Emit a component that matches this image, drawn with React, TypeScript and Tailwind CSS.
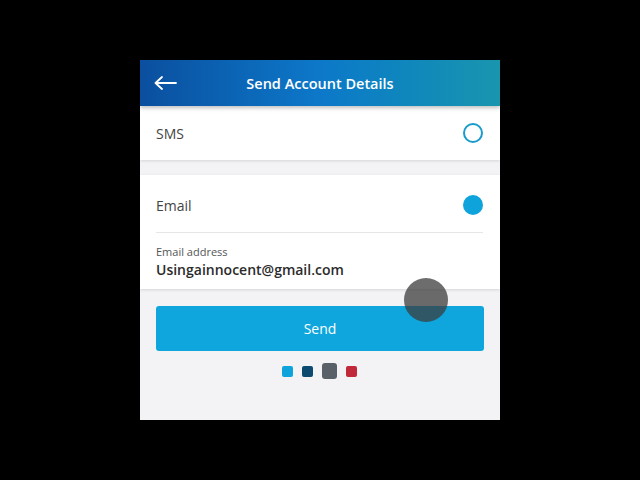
import React from "react";

export default function App() {
  const font = { fontFamily: '"Open Sans", "Noto Sans", sans-serif' };
  return (
    <div className="w-[640px] h-[480px] bg-black flex items-center justify-center" style={font}>
      <div className="relative w-[360px] h-[360px] bg-[#f3f3f5] flex flex-col overflow-hidden">
        {/* Header */}
        <div className="relative z-10 h-[46px] shrink-0 flex items-center bg-gradient-to-r from-[#0b4f9f] via-[#0d78c9] to-[#1a95ae] shadow-[0_2px_4px_rgba(0,0,0,0.25)]">
          <svg className="absolute left-[14px] top-[16px]" width="23" height="14" viewBox="0 0 23 14" fill="none">
            <path d="M22 7H2M8 1L1.5 7L8 13" stroke="white" strokeWidth="1.8" strokeLinecap="round" strokeLinejoin="round" />
          </svg>
          <div className="w-full text-center text-white text-[14.5px] font-semibold pt-[2px]">Send Account Details</div>
        </div>

        {/* SMS card */}
        <div className="h-[54px] shrink-0 bg-white flex items-center justify-between pl-[16px] pr-[17px] shadow-[0_1px_3px_rgba(0,0,0,0.12)]">
          <span className="text-[14px] text-[#444]">SMS</span>
          <span className="w-[20px] h-[20px] rounded-full border-2 border-[#1a9bcb]" />
        </div>

        {/* Email card */}
        <div className="mt-[15px] shrink-0 bg-white flex flex-col pl-[16px] pr-[17px] shadow-[0_1px_3px_rgba(0,0,0,0.12)]">
          <div className="h-[58px] pt-[3px] flex items-center justify-between border-b border-[#e6e6e8]">
            <span className="text-[14px] text-[#444]">Email</span>
            <span className="w-[20px] h-[20px] rounded-full bg-[#0fa3dc]" />
          </div>
          <div className="pt-[11px] pb-[9px] flex flex-col">
            <span className="text-[11px] leading-[16px] text-[#555]">Email address</span>
            <span className="text-[14px] leading-[20px] font-semibold text-[#2b2b2b]">Usingainnocent@gmail.com</span>
          </div>
        </div>

        {/* Send button */}
        <div className="mt-[17px] mx-[16px] h-[45px] shrink-0 rounded-[3px] bg-[#0ea6dd] flex items-center justify-center">
          <span className="text-white text-[14px]">Send</span>
        </div>

        {/* Dots */}
        <div className="mt-[12px] flex items-center justify-center gap-[9px] pr-[1px]">
          <span className="w-[11px] h-[11px] rounded-[2px] bg-[#0fa3dc]" />
          <span className="w-[11px] h-[11px] rounded-[2px] bg-[#0c4a70]" />
          <span className="w-[15px] h-[16px] rounded-[3px] bg-[#5a6068]" />
          <span className="w-[11px] h-[11px] rounded-[2px] bg-[#c1283a]" />
        </div>

        {/* Touch indicator */}
        <div className="absolute left-[264px] top-[218px] w-[44px] h-[44px] rounded-full bg-[rgba(60,60,60,0.75)]" />
      </div>
    </div>
  );
}
